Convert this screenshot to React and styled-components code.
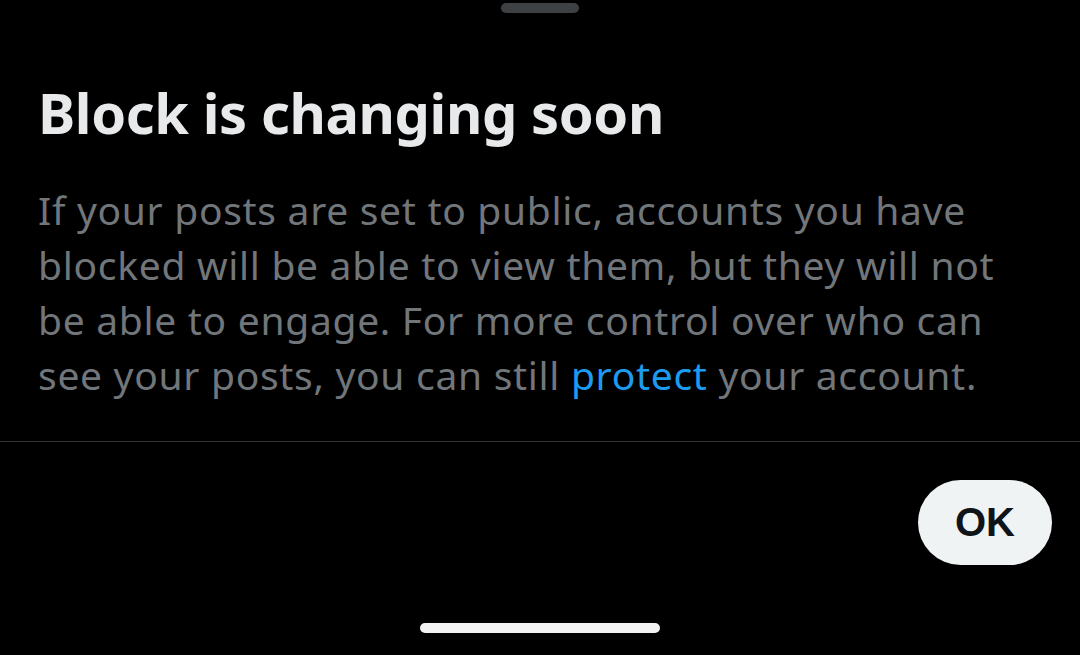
import React from 'react'
import styled, { createGlobalStyle } from 'styled-components'

const GlobalStyle = createGlobalStyle`
    html, body {
        margin: 0;
        padding: 0;
        background: #000;
    }
    body {
        font-family: "Noto Sans", "Liberation Sans", sans-serif;
    }
`

const Sheet = styled.div`
    width: 1080px;
    height: 655px;
    background: #000;
    display: flex;
    flex-direction: column;
    overflow: hidden;
`

const HandleRow = styled.div`
    display: flex;
    justify-content: center;
    padding-top: 3px;
`

const Handle = styled.div`
    width: 78px;
    height: 10px;
    border-radius: 5px;
    background: #3e4144;
`

const Content = styled.div`
    padding: 67px 38px 0 38px;
`

const Title = styled.h1`
    margin: 0;
    font-size: 56px;
    line-height: 64px;
    font-weight: 700;
    color: #e7e9ea;
    letter-spacing: -0.4px;
`

const Body = styled.p`
    margin: 38px 0 0 0;
    font-size: 39px;
    line-height: 55px;
    font-weight: 400;
    color: #71767b;
    letter-spacing: 0.7px;
`

const Line = styled.span`
    display: block;
    white-space: nowrap;
`

const Link = styled.span`
    color: #1d9bf0;
`

const Divider = styled.div`
    margin-top: 39px;
    height: 1px;
    background: #2f3336;
`

const Actions = styled.div`
    display: flex;
    justify-content: flex-end;
    padding: 38px 28px 0 0;
`

const OkButton = styled.button`
    width: 134px;
    height: 85px;
    border: none;
    border-radius: 43px;
    background: #eff3f4;
    color: #0f1419;
    font-family: "Liberation Sans", "Noto Sans", sans-serif;
    font-weight: 700;
    font-size: 40px;
    padding: 0;
`

const HomeRow = styled.div`
    margin-top: auto;
    display: flex;
    justify-content: center;
    padding-bottom: 22px;
`

const HomeBar = styled.div`
    width: 240px;
    height: 10px;
    border-radius: 5px;
    background: #f2f2f2;
`

const lines = [
    'If your posts are set to public, accounts you have',
    'blocked will be able to view them, but they will not',
    'be able to engage. For more control over who can',
]

const App = () => {
  return (
    <>
        <GlobalStyle />
        <Sheet>
            <HandleRow><Handle /></HandleRow>
            <Content>
                <Title>Block is changing soon</Title>
                <Body>
                    {lines.map(l => <Line key={l}>{l}</Line>)}
                    <Line>see your posts, you can still <Link>protect</Link> your account.</Line>
                </Body>
            </Content>
            <Divider />
            <Actions>
                <OkButton>OK</OkButton>
            </Actions>
            <HomeRow><HomeBar /></HomeRow>
        </Sheet>
    </>
  )
}

export default App
